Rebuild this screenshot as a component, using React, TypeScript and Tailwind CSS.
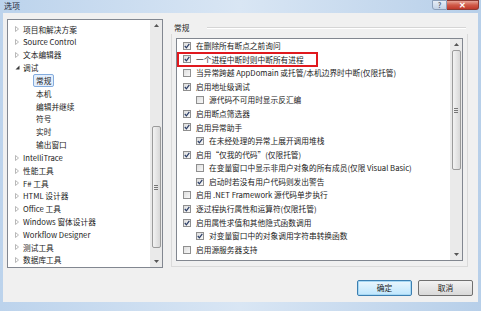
import React from 'react';

type TreeItem = {
  label: string;
  level: 0 | 1;
  arrow?: 'closed' | 'open';
  selected?: boolean;
};

type CheckItem = {
  label: string;
  checked: boolean;
  indent?: boolean;
  highlight?: boolean;
};

const treeItems: TreeItem[] = [
  { label: '项目和解决方案', level: 0, arrow: 'closed' },
  { label: 'Source Control', level: 0, arrow: 'closed' },
  { label: '文本编辑器', level: 0, arrow: 'closed' },
  { label: '调试', level: 0, arrow: 'open' },
  { label: '常规', level: 1, selected: true },
  { label: '本机', level: 1 },
  { label: '编辑并继续', level: 1 },
  { label: '符号', level: 1 },
  { label: '实时', level: 1 },
  { label: '输出窗口', level: 1 },
  { label: 'IntelliTrace', level: 0, arrow: 'closed' },
  { label: '性能工具', level: 0, arrow: 'closed' },
  { label: 'F# 工具', level: 0, arrow: 'closed' },
  { label: 'HTML 设计器', level: 0, arrow: 'closed' },
  { label: 'Office 工具', level: 0, arrow: 'closed' },
  { label: 'Windows 窗体设计器', level: 0, arrow: 'closed' },
  { label: 'Workflow Designer', level: 0, arrow: 'closed' },
  { label: '测试工具', level: 0, arrow: 'closed' },
  { label: '数据库工具', level: 0, arrow: 'closed' },
];

const checkItems: CheckItem[] = [
  { label: '在删除所有断点之前询问', checked: true },
  { label: '一个进程中断时则中断所有进程', checked: true, highlight: true },
  { label: '当异常跨越 AppDomain 或托管/本机边界时中断(仅限托管)', checked: false },
  { label: '启用地址级调试', checked: true },
  { label: '源代码不可用时显示反汇编', checked: false, indent: true },
  { label: '启用断点筛选器', checked: true },
  { label: '启用异常助手', checked: true },
  { label: '在未经处理的异常上展开调用堆栈', checked: true, indent: true },
  { label: '启用“仅我的代码”(仅限托管)', checked: true },
  { label: '在变量窗口中显示非用户对象的所有成员(仅限 Visual Basic)', checked: false, indent: true },
  { label: '启动时若没有用户代码则发出警告', checked: true, indent: true },
  { label: '启用 .NET Framework 源代码单步执行', checked: false },
  { label: '逐过程执行属性和运算符(仅限托管)', checked: true },
  { label: '启用属性求值和其他隐式函数调用', checked: true },
  { label: '对变量窗口中的对象调用字符串转换函数', checked: true, indent: true },
  { label: '启用源服务器支持', checked: false },
];

const TreeArrow = ({ kind }: { kind?: 'closed' | 'open' }) => {
  if (kind === 'open') {
    return (
      <svg width="8" height="6" viewBox="0 0 8 6" className="shrink-0">
        <path d="M4.5 0.5 L4.5 4.5 L0.5 4.5 Z" fill="#3b3b3b" />
      </svg>
    );
  }
  return (
    <svg width="8" height="6" viewBox="0 0 8 6" className="shrink-0">
      <path d="M0.5 0.5 L3.5 3 L0.5 5.5 Z" fill="#fff" stroke="#a6a6a6" strokeWidth="0.8" />
    </svg>
  );
};

const ScrollArrow = ({ up }: { up: boolean }) => (
  <div className="grid h-[11px] place-items-center">
    <svg width="5" height="3" viewBox="0 0 5 3">
      <path d={up ? 'M0 3 L2.5 0 L5 3 Z' : 'M0 0 L2.5 3 L5 0 Z'} fill="#555" />
    </svg>
  </div>
);

const ScrollBar = ({ thumbTop, thumbHeight }: { thumbTop: number; thumbHeight: number }) => (
  <div className="relative flex h-full w-[12px] shrink-0 flex-col justify-between bg-[#eaeaea]">
    <ScrollArrow up />
    <ScrollArrow up={false} />
    <div
      className="absolute left-[1.5px] right-[1.5px] flex flex-col items-center justify-center gap-[1px] rounded-[2px] border border-[#9b9b9b] bg-gradient-to-r from-[#f3f3f3] to-[#d8d8d8]"
      style={{ top: thumbTop, height: thumbHeight }}
    >
      <div className="h-[1px] w-[4px] bg-[#777]" />
      <div className="h-[1px] w-[4px] bg-[#777]" />
      <div className="h-[1px] w-[4px] bg-[#777]" />
    </div>
  </div>
);

const CheckBox = ({ checked }: { checked: boolean }) => (
  <span className="grid size-[8px] shrink-0 place-items-center border border-[#8f8f8f] bg-gradient-to-br from-[#dedede] to-[#f8f8f8]">
    {checked ? (
      <svg width="6" height="6" viewBox="0 0 6 6">
        <path d="M0.8 3 L2.4 4.8 L5.3 0.8" fill="none" stroke="#2a3d66" strokeWidth="1.2" />
      </svg>
    ) : null}
  </span>
);

const App = () => {
  return (
    <div className="flex h-[311px] w-[481px] flex-col overflow-hidden bg-gradient-to-r from-[#bcd3ec] via-[#d9e6f4] to-[#b7cfe9] font-['Noto_Sans_CJK_SC',sans-serif] text-[7.7px] leading-none text-[#1b1b1b]">
      <div className="flex h-[13px] shrink-0 items-start justify-between pl-[4px]">
        <span className="pt-[2px] text-[8px] text-[#1d2a3a]">选项</span>
        <div className="mr-[2px] flex h-[10px]">
          <div className="grid w-[15px] place-items-center rounded-bl-[3px] border border-[#8aa0ba] bg-gradient-to-b from-[#e6eef7] to-[#c3d3e6] text-[7px] font-bold text-[#56657a]">
            ?
          </div>
          <div className="grid w-[32px] place-items-center rounded-br-[3px] border border-l-0 border-[#8c3a32] bg-gradient-to-b from-[#e6a396] via-[#d05a48] to-[#c0392b] text-[8px] font-bold text-white">
            ✕
          </div>
        </div>
      </div>

      <div className="mx-[3px] flex h-[289px] shrink-0 flex-col bg-[#f0f0f0]">
        <div className="flex pl-[4px] pt-[6px]">
          <div className="flex h-[249px] w-[156px] border border-[#828790] bg-white">
            <div className="flex min-w-0 flex-1 flex-col pt-[3px]">
              {treeItems.map((item) => (
                <div key={item.label} className="flex h-[12.84px] shrink-0 items-center whitespace-nowrap">
                  {item.level === 0 ? (
                    <div className="flex items-center pl-[7px]">
                      <TreeArrow kind={item.arrow} />
                      <span>{item.label}</span>
                    </div>
                  ) : (
                    <div className="pl-[25px]">
                      <span
                        className={`flex h-[13px] items-center rounded-[2px] border px-[2px] ${
                          item.selected ? 'border-[#84acdd] bg-[#e3eefc]' : 'border-transparent'
                        }`}
                      >
                        {item.label}
                      </span>
                    </div>
                  )}
                </div>
              ))}
            </div>
            <ScrollBar thumbTop={106} thumbHeight={122} />
          </div>

          <div className="ml-[8px] flex w-[297px] flex-col pt-[2px]">
            <div className="flex h-[13px] items-center pl-[3px]">
              <span>常规</span>
              <div className="ml-[18px] mr-[2px] h-[2px] flex-1 border-t border-b border-t-[#d5d5d5] border-b-white" />
            </div>
            <div className="h-[233px] border border-t-0 border-[#dadada] pl-[4px] pt-[4px]">
              <div className="flex h-[223px] w-[287px] border border-[#828790] bg-white">
                <div className="min-w-0 flex-1 overflow-hidden">
                  {checkItems.map((item) => (
                    <div
                      key={item.label}
                      className={`relative flex h-[13.6px] shrink-0 items-center gap-[5px] whitespace-nowrap ${
                        item.indent ? 'pl-[19px]' : 'pl-[6px]'
                      }`}
                    >
                      <CheckBox checked={item.checked} />
                      <span>{item.label}</span>
                      {item.highlight ? (
                        <div className="absolute left-0 top-[-0.5px] h-[15px] w-[141px] border-2 border-[#e0191e]" />
                      ) : null}
                    </div>
                  ))}
                </div>
                <ScrollBar thumbTop={11} thumbHeight={120} />
              </div>
            </div>
          </div>
        </div>

        <div className="mt-[12px] flex justify-end gap-[6px] pr-[5px]">
          <button
            type="button"
            className="h-[16px] w-[55px] rounded-[2px] border border-[#3c7fb1] bg-gradient-to-b from-[#eaf6fd] to-[#bee6fd] text-[7.7px] shadow-[0_0_0_1px_#a7d8f4_inset]"
          >
            确定
          </button>
          <button
            type="button"
            className="h-[16px] w-[55px] rounded-[2px] border border-[#707070] bg-gradient-to-b from-[#f2f2f2] to-[#d9d9d9] text-[7.7px]"
          >
            取消
          </button>
        </div>
      </div>
    </div>
  );
};

export default App;
